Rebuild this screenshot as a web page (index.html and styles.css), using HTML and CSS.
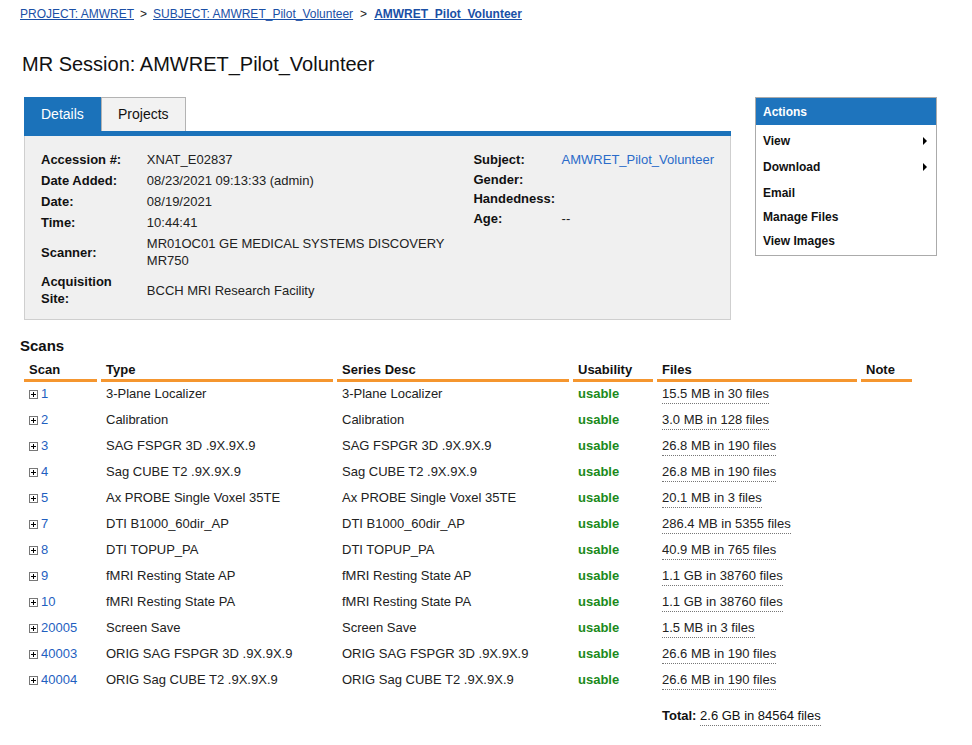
FILE: index.html
```html
<!DOCTYPE html>
<html>
<head>
<meta charset="utf-8">
<link rel="stylesheet" href="styles.css">
</head>
<body>
<div class="page">
  <div class="breadcrumb">
    <a href="#">PROJECT: AMWRET</a><span class="sep">&gt;</span><a href="#">SUBJECT: AMWRET_Pilot_Volunteer</a><span class="sep sep-last">&gt;</span><a href="#" class="current">AMWRET_Pilot_Volunteer</a>
  </div>
  <h1 class="title">MR Session: AMWRET_Pilot_Volunteer</h1>

  <div class="top">
    <div class="details">
      <div class="tabs">
        <div class="tab active">Details</div>
        <div class="tab">Projects</div>
      </div>
      <div class="panel">
        <table class="info info-left">
          <tr><th>Accession #:</th><td>XNAT_E02837</td></tr>
          <tr><th>Date Added:</th><td>08/23/2021 09:13:33 (admin)</td></tr>
          <tr><th>Date:</th><td>08/19/2021</td></tr>
          <tr><th>Time:</th><td>10:44:41</td></tr>
          <tr><th>Scanner:</th><td>MR01OC01 GE MEDICAL SYSTEMS DISCOVERY MR750</td></tr>
          <tr><th>Acquisition Site:</th><td>BCCH MRI Research Facility</td></tr>
        </table>
        <table class="info info-right">
          <tr><th>Subject:</th><td><a href="#">AMWRET_Pilot_Volunteer</a></td></tr>
          <tr><th>Gender:</th><td></td></tr>
          <tr><th>Handedness:</th><td></td></tr>
          <tr><th>Age:</th><td>--</td></tr>
        </table>
      </div>
    </div>

    <div class="actions">
      <div class="actions-head">Actions</div>
      <ul class="actions-list">
        <li class="tall"><span>View</span><i class="arrow"></i></li>
        <li class="tall"><span>Download</span><i class="arrow"></i></li>
        <li class="mid"><span>Email</span></li>
        <li><span>Manage Files</span></li>
        <li><span>View Images</span></li>
      </ul>
    </div>
  </div>

  <h2 class="scans-title">Scans</h2>
  <table class="scans">
    <colgroup>
      <col class="c-scan"><col class="c-type"><col class="c-desc"><col class="c-use"><col class="c-files"><col class="c-note">
    </colgroup>
    <thead>
      <tr><th>Scan</th><th>Type</th><th>Series Desc</th><th>Usability</th><th>Files</th><th>Note</th></tr>
    </thead>
    <tbody>
      <tr><td><span class="plus"><svg width="9" height="9" viewBox="0 0 9 9"><rect x="0.5" y="0.5" width="8" height="8" fill="#fff" stroke="#777"/><path d="M2 4.5h5M4.5 2v5" stroke="#000"/></svg></span><a href="#">1</a></td><td>3-Plane Localizer</td><td>3-Plane Localizer</td><td class="usable">usable</td><td><span class="files">15.5 MB in 30 files</span></td><td></td></tr>
      <tr><td><span class="plus"><svg width="9" height="9" viewBox="0 0 9 9"><rect x="0.5" y="0.5" width="8" height="8" fill="#fff" stroke="#777"/><path d="M2 4.5h5M4.5 2v5" stroke="#000"/></svg></span><a href="#">2</a></td><td>Calibration</td><td>Calibration</td><td class="usable">usable</td><td><span class="files">3.0 MB in 128 files</span></td><td></td></tr>
      <tr><td><span class="plus"><svg width="9" height="9" viewBox="0 0 9 9"><rect x="0.5" y="0.5" width="8" height="8" fill="#fff" stroke="#777"/><path d="M2 4.5h5M4.5 2v5" stroke="#000"/></svg></span><a href="#">3</a></td><td>SAG FSPGR 3D .9X.9X.9</td><td>SAG FSPGR 3D .9X.9X.9</td><td class="usable">usable</td><td><span class="files">26.8 MB in 190 files</span></td><td></td></tr>
      <tr><td><span class="plus"><svg width="9" height="9" viewBox="0 0 9 9"><rect x="0.5" y="0.5" width="8" height="8" fill="#fff" stroke="#777"/><path d="M2 4.5h5M4.5 2v5" stroke="#000"/></svg></span><a href="#">4</a></td><td>Sag CUBE T2 .9X.9X.9</td><td>Sag CUBE T2 .9X.9X.9</td><td class="usable">usable</td><td><span class="files">26.8 MB in 190 files</span></td><td></td></tr>
      <tr><td><span class="plus"><svg width="9" height="9" viewBox="0 0 9 9"><rect x="0.5" y="0.5" width="8" height="8" fill="#fff" stroke="#777"/><path d="M2 4.5h5M4.5 2v5" stroke="#000"/></svg></span><a href="#">5</a></td><td>Ax PROBE Single Voxel 35TE</td><td>Ax PROBE Single Voxel 35TE</td><td class="usable">usable</td><td><span class="files">20.1 MB in 3 files</span></td><td></td></tr>
      <tr><td><span class="plus"><svg width="9" height="9" viewBox="0 0 9 9"><rect x="0.5" y="0.5" width="8" height="8" fill="#fff" stroke="#777"/><path d="M2 4.5h5M4.5 2v5" stroke="#000"/></svg></span><a href="#">7</a></td><td>DTI B1000_60dir_AP</td><td>DTI B1000_60dir_AP</td><td class="usable">usable</td><td><span class="files">286.4 MB in 5355 files</span></td><td></td></tr>
      <tr><td><span class="plus"><svg width="9" height="9" viewBox="0 0 9 9"><rect x="0.5" y="0.5" width="8" height="8" fill="#fff" stroke="#777"/><path d="M2 4.5h5M4.5 2v5" stroke="#000"/></svg></span><a href="#">8</a></td><td>DTI TOPUP_PA</td><td>DTI TOPUP_PA</td><td class="usable">usable</td><td><span class="files">40.9 MB in 765 files</span></td><td></td></tr>
      <tr><td><span class="plus"><svg width="9" height="9" viewBox="0 0 9 9"><rect x="0.5" y="0.5" width="8" height="8" fill="#fff" stroke="#777"/><path d="M2 4.5h5M4.5 2v5" stroke="#000"/></svg></span><a href="#">9</a></td><td>fMRI Resting State AP</td><td>fMRI Resting State AP</td><td class="usable">usable</td><td><span class="files">1.1 GB in 38760 files</span></td><td></td></tr>
      <tr><td><span class="plus"><svg width="9" height="9" viewBox="0 0 9 9"><rect x="0.5" y="0.5" width="8" height="8" fill="#fff" stroke="#777"/><path d="M2 4.5h5M4.5 2v5" stroke="#000"/></svg></span><a href="#">10</a></td><td>fMRI Resting State PA</td><td>fMRI Resting State PA</td><td class="usable">usable</td><td><span class="files">1.1 GB in 38760 files</span></td><td></td></tr>
      <tr><td><span class="plus"><svg width="9" height="9" viewBox="0 0 9 9"><rect x="0.5" y="0.5" width="8" height="8" fill="#fff" stroke="#777"/><path d="M2 4.5h5M4.5 2v5" stroke="#000"/></svg></span><a href="#">20005</a></td><td>Screen Save</td><td>Screen Save</td><td class="usable">usable</td><td><span class="files">1.5 MB in 3 files</span></td><td></td></tr>
      <tr><td><span class="plus"><svg width="9" height="9" viewBox="0 0 9 9"><rect x="0.5" y="0.5" width="8" height="8" fill="#fff" stroke="#777"/><path d="M2 4.5h5M4.5 2v5" stroke="#000"/></svg></span><a href="#">40003</a></td><td>ORIG SAG FSPGR 3D .9X.9X.9</td><td>ORIG SAG FSPGR 3D .9X.9X.9</td><td class="usable">usable</td><td><span class="files">26.6 MB in 190 files</span></td><td></td></tr>
      <tr><td><span class="plus"><svg width="9" height="9" viewBox="0 0 9 9"><rect x="0.5" y="0.5" width="8" height="8" fill="#fff" stroke="#777"/><path d="M2 4.5h5M4.5 2v5" stroke="#000"/></svg></span><a href="#">40004</a></td><td>ORIG Sag CUBE T2 .9X.9X.9</td><td>ORIG Sag CUBE T2 .9X.9X.9</td><td class="usable">usable</td><td><span class="files">26.6 MB in 190 files</span></td><td></td></tr>
    </tbody>
    <tfoot>
      <tr><td></td><td></td><td></td><td></td><td class="total"><b>Total:</b> <span class="files">2.6 GB in 84564 files</span></td><td></td></tr>
    </tfoot>
  </table>
</div>
</body>
</html>
```

FILE: styles.css
```css
* { box-sizing: border-box; }

body {
  margin: 0;
  font-family: "Liberation Sans", Arial, sans-serif;
  color: #111;
  background: #fff;
}

.page {
  padding-left: 20px;
  width: 972px;
}

a { color: #1f5fbf; text-decoration: none; }

.breadcrumb {
  font-size: 12px;
  line-height: 14px;
  margin-top: 7px;
  height: 14px;
}
.breadcrumb a {
  color: #1a4fa6;
  text-decoration: underline;
}
.breadcrumb a.current { font-weight: bold; }
.breadcrumb .sep {
  padding: 0 6px;
  color: #222;
}
.breadcrumb .sep-last { padding: 0 7px 0 7px; }

.title {
  font-size: 20px;
  font-weight: normal;
  line-height: 24px;
  margin: 31px 0 0 2px;
  color: #111;
}

.top {
  display: flex;
  gap: 24px;
  margin: 21px 0 0 4px;
  align-items: flex-start;
}

.details { width: 707px; }

.tabs {
  display: flex;
  height: 39px;
  border-bottom: 5px solid #1b72ba;
}
.tab {
  height: 34px;
  line-height: 33px;
  font-size: 14px;
  padding: 0 16px;
  border: 1px solid #b3b3b3;
  border-bottom: none;
  background: #f2f2f2;
  color: #111;
}
.tab.active {
  background: #1b72ba;
  border-color: #1b72ba;
  color: #fff;
  width: 77px;
  padding: 0 0 0 16px;
}

.panel {
  background: #f0f0f0;
  border: 1px solid #cfcfcf;
  border-top: none;
  padding: 13px 16px 10px 16px;
  display: flex;
  align-items: flex-start;
  gap: 18px;
  min-height: 184px;
}

.info {
  border-collapse: collapse;
  font-size: 13px;
}
.info th {
  text-align: left;
  font-weight: bold;
  vertical-align: middle;
  padding: 2px 0;
  line-height: 17px;
}
.info td {
  vertical-align: middle;
  padding: 2px 0;
  line-height: 17px;
  color: #222;
}
.info-left th { width: 106px; padding-right: 8px; }
.info-left td { width: 310px; }
.info-right { margin-top: 1px; }
.info-right th { width: 89px; line-height: 15.5px; }
.info-right td { line-height: 15.5px; }
.info-right a { color: #2a6bc9; }

.actions {
  width: 182px;
  border: 1px solid #ababab;
  font-size: 12px;
  font-weight: bold;
}
.actions-head {
  background: #1e74bd;
  color: #fff;
  height: 27px;
  line-height: 25px;
  padding: 2px 0 0 7px;
}
.actions-list {
  list-style: none;
  margin: 0;
  padding: 3px 0 2px 0;
}
.actions-list li {
  display: flex;
  align-items: center;
  justify-content: space-between;
  height: 24px;
  padding: 0 9px 0 7px;
  color: #111;
}
.actions-list li.tall { height: 26px; }
.actions-list li.mid { height: 25px; }
.arrow {
  width: 0;
  height: 0;
  border-left: 4px solid #000;
  border-top: 4px solid transparent;
  border-bottom: 4px solid transparent;
}

.scans-title {
  font-size: 15px;
  font-weight: bold;
  line-height: 18px;
  margin: 17px 0 0 0;
  color: #111;
}

.scans {
  border-collapse: separate;
  border-spacing: 4px 0;
  table-layout: fixed;
  width: 896px;
  font-size: 13px;
  margin-top: 0;
}
.c-scan { width: 73px; }
.c-type { width: 232px; }
.c-desc { width: 232px; }
.c-use { width: 80px; }
.c-files { width: 200px; }
.c-note { width: 51px; }

.scans th {
  text-align: left;
  font-weight: bold;
  line-height: 16px;
  padding: 7px 5px 1px 5px;
  border-bottom: 3px solid #f5962f;
  color: #111;
}
.scans tbody td {
  line-height: 16px;
  padding: 4px 5px 6px 5px;
  height: 26px;
  white-space: nowrap;
  color: #222;
}
.plus {
  display: inline-block;
  width: 9px;
  height: 9px;
  margin-right: 3px;
  vertical-align: -1px;
}
.plus svg { display: block; }
.scans a { color: #1f5fbf; }
.scans tbody td.usable {
  color: #1b8a1b;
  font-weight: bold;
}
.files {
  border-bottom: 1px dotted #777;
  padding-bottom: 2px;
}
.scans tfoot td {
  padding: 14px 5px 5px 5px;
  line-height: 16px;
  white-space: nowrap;
}
.total b { color: #111; }
```
